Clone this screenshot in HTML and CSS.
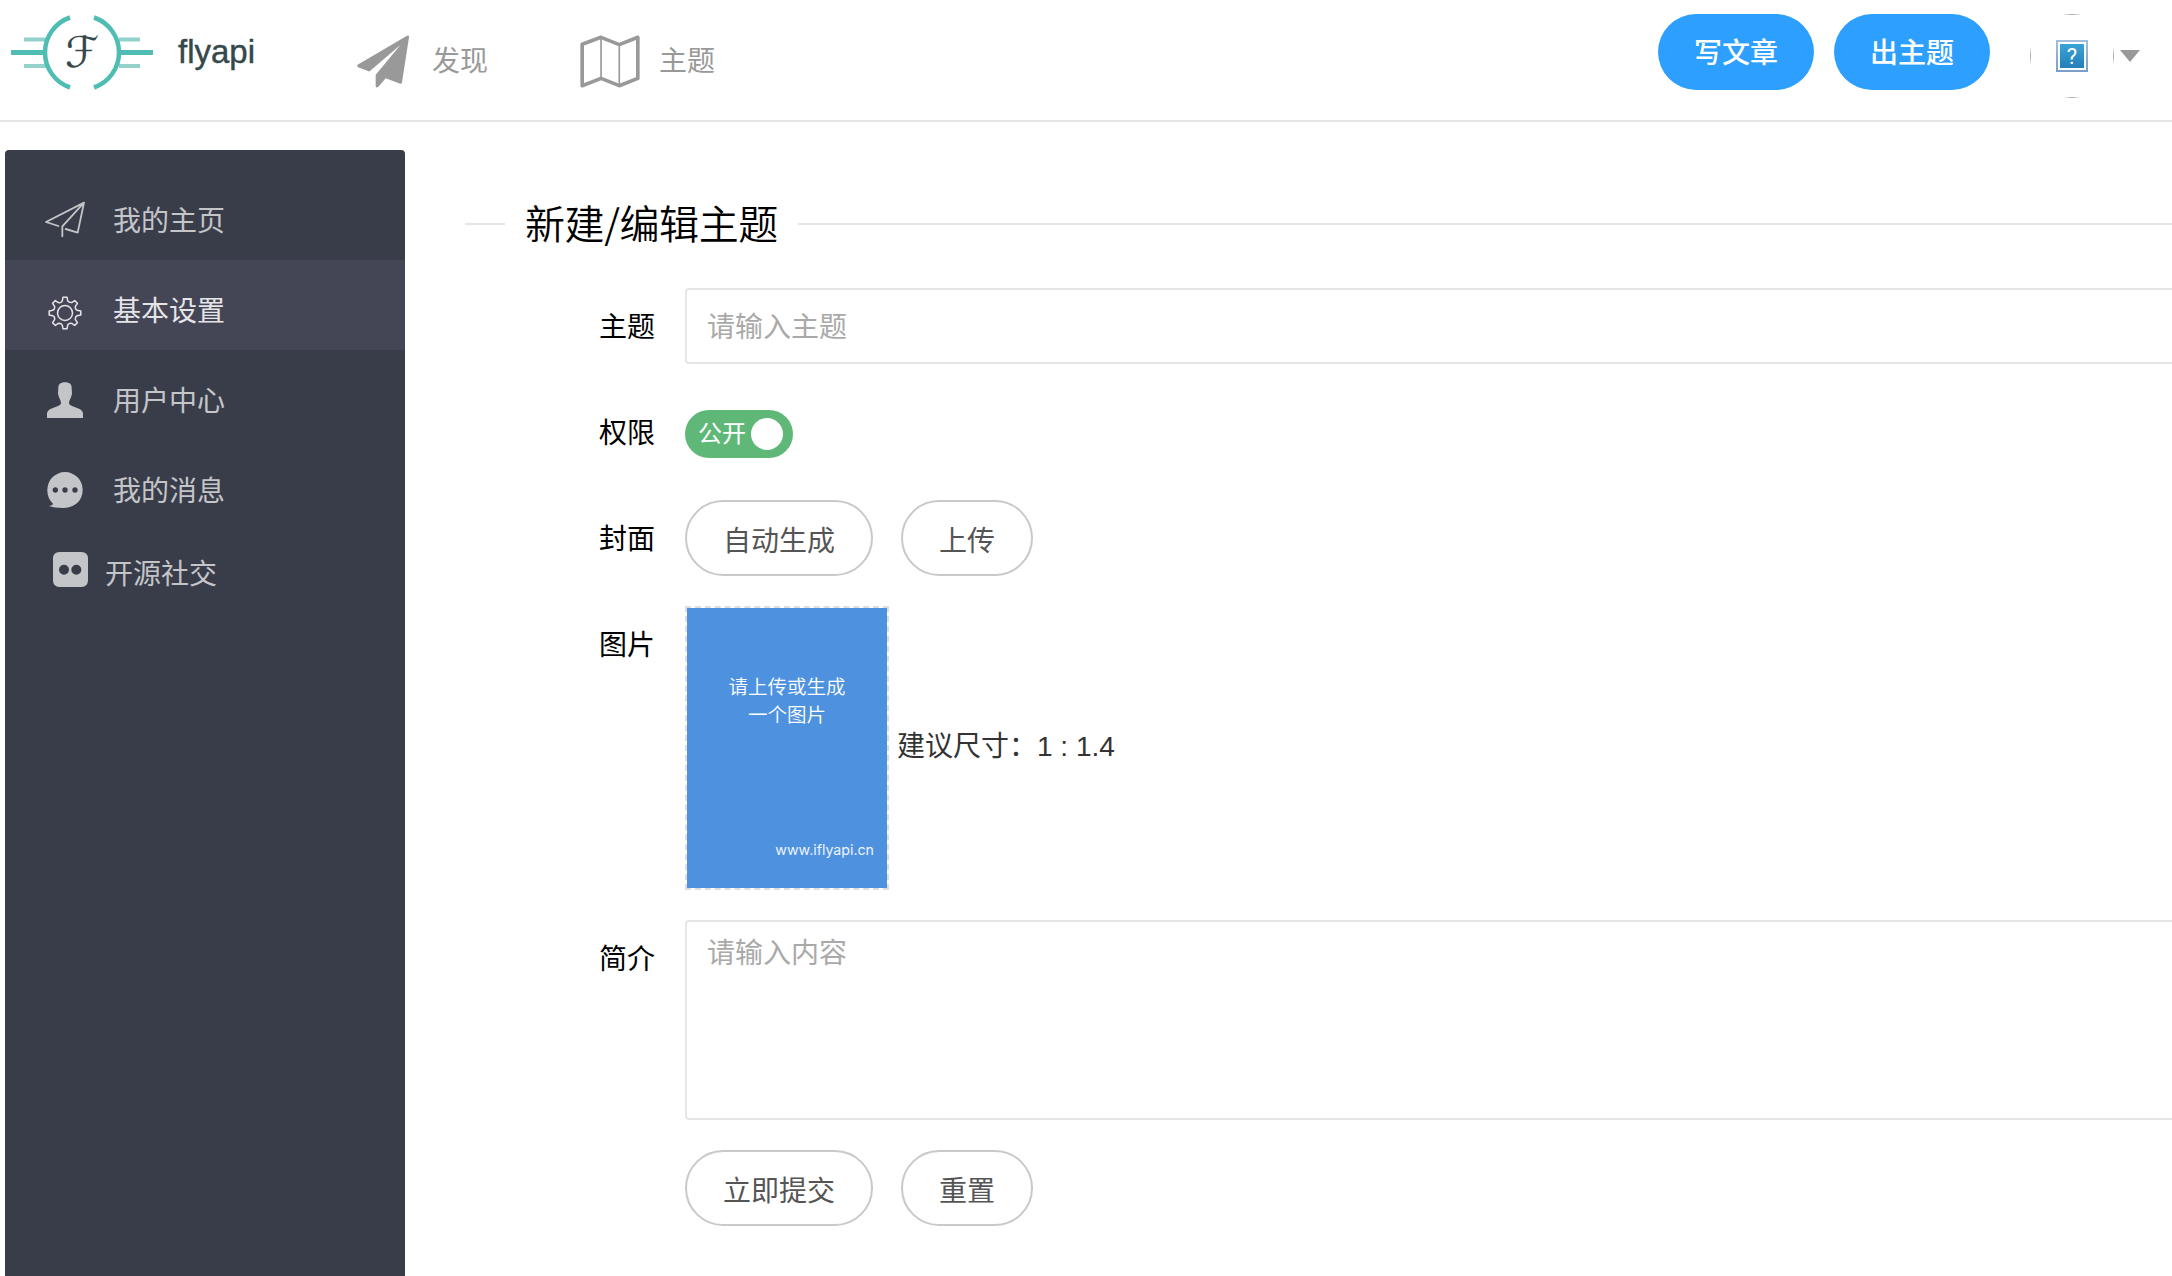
FILE: index.html
```
<!DOCTYPE html>
<html lang="zh-CN">
<head>
<meta charset="utf-8">
<title>flyapi</title>
<link rel="stylesheet" href="styles.css">
</head>
<body>
<header class="header">
  <a class="logo">
    <svg class="logo-mark" viewBox="0 0 144 76" width="144" height="76" fill="none">
      <g stroke="#93d2cb" stroke-width="4"><path d="M13 25.500H35M13 52H35M108 25.500H129M108 52H129"/></g>
      <g stroke="#4fbdb3" stroke-width="5"><path d="M0 38.500H34M108 38.500H142"/></g>
      <path stroke="#4fbdb3" stroke-width="4.500" d="M59 3.500A37 37 0 0 0 59 73.500M83 3.500A37 37 0 0 1 83 73.500"/>
      <text x="71" y="53" text-anchor="middle" class="logo-letter">ℱ</text>
    </svg>
    <span class="logo-text">flyapi</span>
  </a>
  <nav class="nav">
    <a class="nav-item nav-discover">
      <svg viewBox="51 105 156 158" width="52" height="53" fill="#999"><path d="M201 107Q208 104 207 111L186 246Q185 252 179 250L137 234L116 259Q107 266 107 257V224L182 134L88 214L54 201Q49 197 54 193Z"/></svg>
      <span>发现</span>
    </a>
    <a class="nav-item nav-topic">
      <svg viewBox="719 104 180 160" width="60" height="53" fill="none" stroke="#999" stroke-linejoin="round"><path stroke-width="11" d="M725 132L782 111L837 133L893 111V235L837 257L782 235L725 257Z"/><path stroke-width="5" d="M782 111V235M837 133V257"/></svg>
      <span>主题</span>
    </a>
  </nav>
  <div class="actions">
    <button class="btn-primary">写文章</button>
    <button class="btn-primary">出主题</button>
    <div class="avatar"><div class="avatar-frame">
      <svg viewBox="0 0 32 32" width="32" height="32">
        <defs>
          <linearGradient id="frame" x2="0" y2="1"><stop stop-color="#a3bfde"/><stop offset="1" stop-color="#7b9dcb"/></linearGradient>
          <linearGradient id="tile" x2="0" y2="1"><stop stop-color="#37a3d6"/><stop offset="1" stop-color="#267fba"/></linearGradient>
        </defs>
        <path fill="url(#frame)" d="M0 0H32V32H0Z"/><path fill="#fff" d="M2 2H30V30H2Z"/><path fill="url(#tile)" d="M4 4H28V28H4Z"/>
        <text x="16" y="24" text-anchor="middle" class="avatar-mark">?</text>
      </svg>
    </div></div>
    <i class="caret"></i>
  </div>
</header>
<div class="body">
  <aside class="side">
    <a class="side-item">
      <span class="side-icon icon-plane"><svg viewBox="135 181 120 111" width="40" height="37" fill="none" stroke="currentColor" stroke-width="5.500" stroke-linejoin="round" stroke-linecap="round"><path d="M175 256L138 244L252 186L233 276L197 265M187 287V257L252 186"/></svg></span>我的主页</a>
    <a class="side-item active">
      <span class="side-icon icon-gear"><svg viewBox="0 0 34 34" width="34" height="34" fill="none" stroke="currentColor" stroke-width="1.500" stroke-linejoin="round"><circle cx="17" cy="17" r="7.500"/><path d="M14.300 4.800L15 1.200H19L19.700 4.800Q20.500 6 22 6.300L23.700 6.600L26.700 4.600L29.400 7.300L27.400 10.300Q27 12 28 13.500L29.200 14.300L32.800 15V19L29.200 19.700Q27.500 20.500 27.300 22.500L27.400 23.700L29.400 26.700L26.700 29.400L23.700 27.400Q22 27 20.500 28L19.700 29.200L19 32.800H15L14.300 29.200Q13.500 27.500 11.500 27.300L10.300 27.400L7.300 29.400L4.600 26.700L6.600 23.700Q7 22 6 20.500L4.800 19.700L1.200 19V15L4.800 14.300Q6.500 13.500 6.700 11.500L6.600 10.300L4.600 7.300L7.300 4.600L10.300 6.600Q12 7 13.500 6Z"/></svg></span>基本设置</a>
    <a class="side-item">
      <span class="side-icon"><svg viewBox="141 32 108 108" width="36" height="36" fill="currentColor"><path d="M195 33C209 33 216 40 215 51L216 66Q216 72 212 80Q207 89 207 96Q207 101 216 104L237 112Q249 118 249 126V140H141V126Q141 118 153 112L174 104Q183 101 183 96Q183 89 178 80Q174 72 174 66L175 51C174 40 181 33 195 33Z"/></svg></span>用户中心</a>
    <a class="side-item">
      <span class="side-icon"><svg viewBox="141 303 108 108" width="36" height="36" fill="currentColor" fill-rule="evenodd"><path d="M195 303A53 53 0 0 1 248 357C248 391 222 411 188 411Q163 411 146 405Q157 404 159 398Q141 381 142 357A53 53 0 0 1 195 303ZM158 357a8 8 0 1 0 16 0a8 8 0 1 0-16 0ZM187 357a8 8 0 1 0 16 0a8 8 0 1 0-16 0ZM217 357a8 8 0 1 0 16 0a8 8 0 1 0-16 0Z"/></svg></span>我的消息</a>
    <a class="side-item side-social">
      <svg viewBox="159 546 105 105" width="35" height="35" fill="currentColor" fill-rule="evenodd"><path d="M179 546H244Q264 546 264 566V631Q264 651 244 651H179Q159 651 159 631V566Q159 546 179 546ZM177 599a15 15 0 1 0 30 0a15 15 0 1 0-30 0ZM214 599a15 15 0 1 0 30 0a15 15 0 1 0-30 0Z"/></svg>
      <span>开源社交</span></a>
  </aside>
  <main class="main">
    <div class="title"><h1>新建/编辑主题</h1></div>
    <form class="form">
      <div class="row"><label>主题</label><input class="field" placeholder="请输入主题"></div>
      <div class="row"><label>权限</label><div class="inline"><span class="switch">公开<i></i></span></div></div>
      <div class="row"><label>封面</label><div class="inline"><button type="button" class="btn">自动生成</button><button type="button" class="btn">上传</button></div></div>
      <div class="row"><label>图片</label>
        <div class="inline cover-row">
          <div class="cover"><p>请上传或生成<br>一个图片</p><small>www.iflyapi.cn</small></div>
          <span class="hint">建议尺寸：1 : 1.4</span>
        </div>
      </div>
      <div class="row"><label>简介</label><textarea class="field area" placeholder="请输入内容"></textarea></div>
      <div class="row"><label></label><div class="inline"><button type="button" class="btn">立即提交</button><button type="button" class="btn">重置</button></div></div>
    </form>
  </main>
</div>
</body>
</html>
```

FILE: styles.css
```
* { box-sizing: border-box; margin: 0; padding: 0; }
html, body { height: 100%; overflow: hidden; }
body {
  display: flex;
  flex-direction: column;
  background: #fff;
  color: #333;
  font: 28px/36px "Liberation Sans", "Noto Sans CJK SC", sans-serif;
}
svg { display: block; flex: none; }
button, input, textarea { font: inherit; }

.header {
  flex: none;
  display: flex;
  align-items: flex-start;
  height: 122px;
  border-bottom: 2px solid #e6e6e6;
}
.logo { display: flex; width: 357px; padding: 14px 0 0 11px; }
.logo-letter { font: italic 43px "DejaVu Serif", "DejaVu Sans", serif; fill: #35484a; }
.logo-text { margin: 20px 0 0 23px; font-size: 33px; color: #35484a; -webkit-text-stroke: .4px #35484a; }
.nav { display: flex; padding-top: 35px; color: #999; }
.nav-item { display: flex; }
.nav-item span { margin: 9px 0 0 -1px; }
.nav-discover { gap: 24px; width: 223px; }
.nav-topic { gap: 20px; }
.actions { display: flex; margin-left: auto; padding: 14px 32px 0 0; }
.btn-primary {
  width: 156px;
  height: 76px;
  margin-right: 20px;
  padding-top: 4px;
  border: 0;
  border-radius: 38px;
  background: #2d9fff;
  color: #fff;
  font-weight: 500;
}
.avatar { width: 84px; height: 84px; margin-left: 20px; border-radius: 50%; overflow: hidden; }
.avatar-frame { display: flex; align-items: center; justify-content: center; height: 84px; border: 1px solid #aaa; }
.avatar-mark { font: 22px Roboto, sans-serif; fill: #fff; }
.caret { margin: 36px 0 0 6px; border: 10px solid transparent; border-width: 12px 10px 0; border-top-color: #999; height: 0; }

.body { flex: 1; display: flex; padding: 28px 0 0 5px; min-height: 0; }
.side {
  flex: none;
  width: 400px;
  padding-top: 20px;
  border-radius: 4px 4px 0 0;
  background: #393d49;
  color: #c4c5c9;
}
.side-item { display: flex; align-items: center; height: 90px; padding: 13px 0 0 40px; }
.side-item.active { background: #444655; color: #e5e5e8; }
.side-icon { display: flex; justify-content: center; width: 40px; height: 40px; margin-right: 28px; }
.icon-plane { height: 42px; }
.icon-gear { padding-top: 4px; }
.side-social { gap: 17px; padding: 0 0 0 48px; height: 80px; }
.side-social svg { margin-top: -2px; }
.side-social span { padding-top: 10px; }

.main { flex: none; width: 1780px; padding: 50px 0 0 60px; }
.title { display: flex; align-items: center; gap: 20px; height: 48px; }
.title::before, .title::after { content: ""; height: 2px; background: #e6e6e6; width: 40px; }
.title::after { flex: 1; }
h1 {
  width: 253px;
  padding-bottom: 5px;
  white-space: nowrap;
  font: 350 40px/48px "Noto Sans CJK SC", sans-serif;
  letter-spacing: -.4px;
  color: #000;
}

.form { display: flex; flex-direction: column; gap: 30px; padding-top: 40px; }
.row { display: flex; align-items: flex-start; }
.row label { flex: none; width: 220px; padding: 22px 30px 18px; text-align: right; color: #000; }
.field {
  flex: 1;
  height: 76px;
  padding: 3px 20px 0;
  border: 2px solid #e6e6e6;
  border-radius: 4px;
  outline: 0;
  resize: none;
  background: #fff;
}
.field::placeholder { color: #a9a9a9; opacity: 1; }
.area { height: 200px; padding-top: 14px; }
.inline { display: flex; gap: 28px; }
.btn {
  height: 76px;
  padding: 7px 36px 0;
  border: 2px solid #c9c9c9;
  border-radius: 38px;
  background: #fff;
  color: #555;
}
.switch {
  display: flex;
  align-items: center;
  justify-content: space-between;
  width: 108px;
  height: 48px;
  margin-top: 16px;
  padding: 0 10px 0 13px;
  border-radius: 24px;
  background: #5fb878;
  color: #fff;
  font-size: 24px;
}
.switch i { width: 32px; height: 32px; border-radius: 50%; background: #fff; }
.cover-row { gap: 8px; align-items: center; }
.cover {
  display: flex;
  flex-direction: column;
  justify-content: space-between;
  width: 204px;
  height: 284px;
  padding: 65px 13px 28px;
  border: 2px dashed #ddd;
  background: #4e92df padding-box;
  color: #fff;
}
.cover p { text-align: center; font-size: 19.500px; line-height: 28px; font-weight: 350; }
.cover small { align-self: flex-end; font: 14.200px/20px Inter, sans-serif; opacity: .9; }
.hint { padding-bottom: 2px; }
```
